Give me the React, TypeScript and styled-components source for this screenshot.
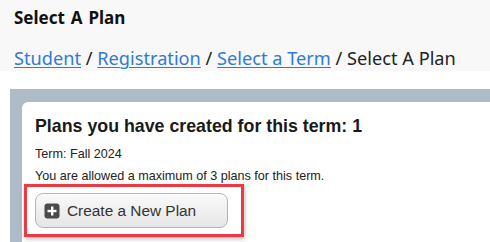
import React from "react";
import styled, { createGlobalStyle } from "styled-components";

const GlobalStyle = createGlobalStyle`
  html, body {
    margin: 0;
    padding: 0;
    background: #ffffff;
  }
  body {
    width: 490px;
    height: 242px;
    overflow: hidden;
  }
`;

const Header = styled.div`
  background-color: #f8f8f8;
  height: 71px;
  padding: 7px 14px 0;
  box-sizing: border-box;
  font-family: "Noto Sans", "Open Sans", sans-serif;
`;

const PageTitle = styled.div`
  font-weight: bold;
  font-size: 17px;
  color: #111;
  word-spacing: 1.5px;
  line-height: 22px;
`;

const Crumbs = styled.div`
  margin-top: 18px;
  font-size: 18.2px;
  color: #222;
  line-height: 22px;
  white-space: nowrap;
`;

const CrumbLink = styled.a`
  color: #2f7bd3;
  text-decoration: underline;
  text-underline-offset: 2px;
  text-decoration-thickness: 1px;
  cursor: pointer;
`;

const Gap = styled.div`
  height: 18px;
`;

const Panel = styled.div`
  margin-left: 10px;
  background-color: #aebbc8;
  padding: 13px 0 0 12px;
  height: 153px;
  box-sizing: border-box;
`;

const Card = styled.div`
  background: #ffffff;
  border-radius: 6px 0 0 0;
  padding: 13px 13px 0 13px;
  height: 100%;
  box-sizing: border-box;
  font-family: "Liberation Sans", Arial, sans-serif;
  color: #222;
`;

const CardTitle = styled.div`
  font-weight: bold;
  font-size: 17.8px;
  line-height: 22px;
  color: #1a1a1a;
`;

const Note = styled.div<{ $top: number }>`
  font-size: 12.6px;
  line-height: 14px;
  margin-top: ${(p) => p.$top}px;
  color: #222;
`;

const Highlight = styled.div`
  display: flex;
  width: fit-content;
  margin: 1px 0 0 -11px;
  padding: 6px 13px 6px 8px;
  border: 3px solid #ec3a44;
  box-shadow: 1px 2px 4px rgba(0, 0, 0, 0.25);
  background: #fff;
`;

const Button = styled.button`
  display: flex;
  align-items: center;
  gap: 7px;
  width: 193px;
  height: 35px;
  padding: 0 0 0 8px;
  box-sizing: border-box;
  border: 1px solid #b4b4b4;
  border-radius: 8px;
  background: linear-gradient(#f9f9f9, #e6e6e6);
  box-shadow: inset 0 1px 0 #ffffff;
  font-family: "Liberation Sans", Arial, sans-serif;
  font-size: 15.4px;
  color: #333;
  cursor: pointer;
`;

const PlusIcon = () => (
  <svg width="16" height="16" viewBox="0 0 16 16">
    <rect x="0.5" y="0.5" width="15" height="15" rx="3" fill="#4a4a4a" />
    <rect x="7" y="3.5" width="2.4" height="9" fill="#fff" />
    <rect x="3.5" y="6.8" width="9" height="2.4" fill="#fff" />
  </svg>
);

export default function App() {
  return (
    <>
      <GlobalStyle />
      <Header>
        <PageTitle>Select A Plan</PageTitle>
        <Crumbs>
          <CrumbLink>Student</CrumbLink> / <CrumbLink>Registration</CrumbLink> /{" "}
          <CrumbLink>Select a Term</CrumbLink> / Select A Plan
        </Crumbs>
      </Header>
      <Gap />
      <Panel>
        <Card>
          <CardTitle>Plans you have created for this term: 1</CardTitle>
          <Note $top={10}>Term: Fall 2024</Note>
          <Note $top={8}>You are allowed a maximum of 3 plans for this term.</Note>
          <Highlight>
            <Button>
              <PlusIcon />
              Create a New Plan
            </Button>
          </Highlight>
        </Card>
      </Panel>
    </>
  );
}
